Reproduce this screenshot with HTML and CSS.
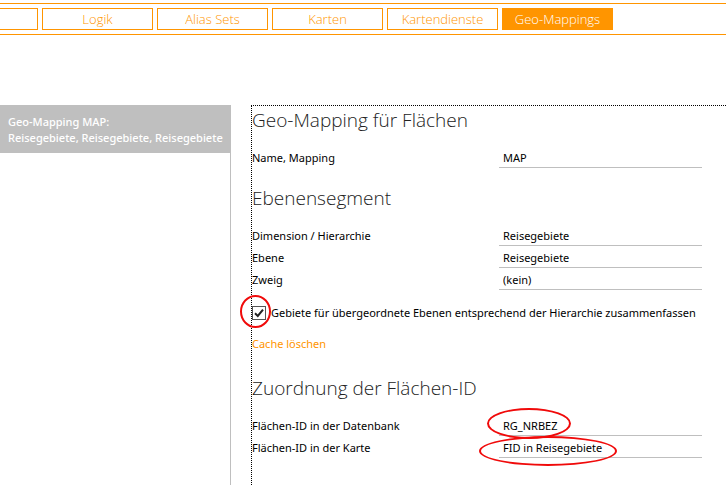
FILE: index.html
```html
<!DOCTYPE html>
<html lang="de">
<head>
<meta charset="utf-8">
<meta name="viewport" content="width=device-width, initial-scale=1">
<title>Geo-Mappings</title>
<link rel="stylesheet" href="styles.css">
</head>
<body>
<nav class="tabs">
  <button class="tab tab-cut" type="button" aria-label="Zurück"></button>
  <button class="tab" type="button">Logik</button>
  <button class="tab" type="button">Alias Sets</button>
  <button class="tab" type="button">Karten</button>
  <button class="tab" type="button">Kartendienste</button>
  <button class="tab tab-active" type="button">Geo-Mappings</button>
</nav>
<div class="content">
  <aside class="sidebar">
    <button class="entry" type="button">Geo-Mapping MAP:<br>Reisegebiete, Reisegebiete, Reisegebiete</button>
  </aside>
  <main class="panel">
    <section class="group">
      <h2>Geo-Mapping für Flächen</h2>
      <div class="row">
        <label for="name">Name, Mapping</label>
        <div class="field"><input id="name" type="text" value="MAP"></div>
      </div>
    </section>
    <section class="group">
      <h2>Ebenensegment</h2>
      <div class="row">
        <label for="dimension">Dimension / Hierarchie</label>
        <div class="field"><select id="dimension"><option>Reisegebiete</option></select></div>
      </div>
      <div class="row">
        <label for="level">Ebene</label>
        <div class="field"><select id="level"><option>Reisegebiete</option></select></div>
      </div>
      <div class="row">
        <label for="branch">Zweig</label>
        <div class="field"><select id="branch"><option>(kein)</option></select></div>
      </div>
      <div class="check">
        <input id="merge" type="checkbox" checked>
        <svg class="tick" viewBox="0 0 14 14" aria-hidden="true"><path d="M3 7.2 5.8 10 11 3.6"/></svg>
        <label for="merge">Gebiete für übergeordnete Ebenen entsprechend der Hierarchie zusammenfassen</label>
        <span class="mark mark-check"></span>
      </div>
      <a class="action" href="#">Cache löschen</a>
    </section>
    <section class="group">
      <h2>Zuordnung der Flächen-ID</h2>
      <div class="row">
        <label for="db-id">Flächen-ID in der Datenbank</label>
        <div class="field"><select id="db-id"><option>RG_NRBEZ</option></select><span class="mark mark-db"></span></div>
      </div>
      <div class="row">
        <label for="map-id">Flächen-ID in der Karte</label>
        <div class="field"><select id="map-id"><option>FID in Reisegebiete</option></select><span class="mark mark-map"></span></div>
      </div>
    </section>
  </main>
</div>
</body>
</html>
```
FILE: styles.css
```css
* {
  box-sizing: border-box;
}

body {
  margin: 0;
  min-height: 100vh;
  display: flex;
  flex-direction: column;
  background: #fff;
  color: #000;
  font: 11px/16px "Segoe UI", "Noto Sans", sans-serif;
}

button,
input,
select {
  font: inherit;
  color: inherit;
  border-radius: 0;
}

.tabs {
  display: flex;
  gap: 4px;
  margin-top: 3px;
  padding: 4px 0;
  border: solid #ff9500;
  border-width: 1px 0;
  overflow: hidden;
}

.tab {
  flex: 0 0 111px;
  height: 22px;
  padding: 0;
  border: 1px solid #ff9500;
  background: #fff;
  color: #ff9500;
  font-family: "Segoe UI", "Open Sans", sans-serif;
  font-size: 13px;
  font-weight: 300;
  line-height: 20px;
}

.tab-cut {
  margin-left: -73px;
}

.tab-active {
  background: #ff9500;
  color: #fff;
}

.content {
  flex: 1;
  display: flex;
  gap: 20px;
  margin-top: 70px;
}

.sidebar {
  flex: 0 0 231px;
  min-width: 0;
  border-right: 1px solid #bfbfbf;
}

.entry {
  display: block;
  width: 100%;
  padding: 9px 8px 7px;
  border: 0;
  background: #bfbfbf;
  color: #fff;
  font-weight: 500;
  text-align: left;
  white-space: nowrap;
}

.panel {
  flex: 1;
  min-width: 0;
  padding-right: 24px;
  border-top: 1px dotted #000;
  border-left: 1px dotted #000;
}

.group + .group {
  margin-top: 16px;
}

h2 {
  margin: 0 0 12px;
  color: #222;
  font: 300 19px/28px "Segoe UI", "Open Sans", sans-serif;
}

.row {
  display: grid;
  grid-template-columns: 247px 1fr;
  height: 22px;
}

.row label {
  padding-top: 4px;
}

.field {
  position: relative;
  height: 22px;
  border-bottom: 1px solid #bfbfbf;
}

.field input,
.field select {
  display: block;
  width: 100%;
  height: 21px;
  padding: 2px 4px 0;
  border: 0;
  background: transparent;
  appearance: none;
  outline: 0;
}

.check {
  position: relative;
  display: flex;
  align-items: center;
  gap: 5px;
  height: 22px;
  margin-top: 12px;
  white-space: nowrap;
}

.check input {
  flex: 0 0 14px;
  height: 14px;
  margin: 0;
  border: 1px solid #555;
  background: #fff;
  appearance: none;
}

.tick {
  position: absolute;
  left: 0;
  top: 4px;
  width: 14px;
  height: 14px;
  fill: none;
  stroke: #222;
  stroke-width: 2;
  pointer-events: none;
}

.check input:not(:checked) + .tick {
  display: none;
}

.action {
  display: block;
  width: fit-content;
  margin: 12px 0 22px;
  color: #ff9500;
  text-decoration: none;
}

.mark {
  position: absolute;
  border: 2px solid #f00a0a;
  border-radius: 50%;
  pointer-events: none;
}

.mark-check {
  left: -12px;
  top: -7px;
  width: 31px;
  height: 33px;
}

.mark-db {
  left: -12px;
  top: -6px;
  width: 84px;
  height: 31px;
}

.mark-map {
  left: -20px;
  top: 0;
  width: 138px;
  height: 30px;
}
```
